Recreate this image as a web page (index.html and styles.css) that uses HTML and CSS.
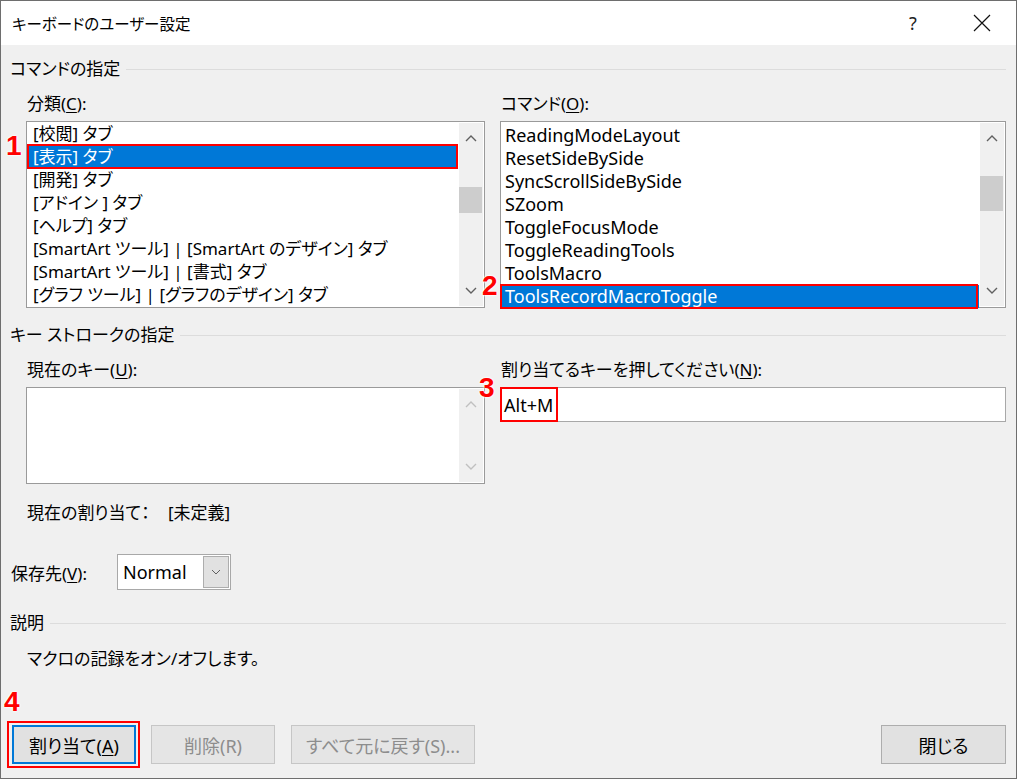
FILE: index.html
```html
<!DOCTYPE html>
<html lang="ja">
<head>
<meta charset="utf-8">
<link rel="stylesheet" href="styles.css">
</head>
<body>
<div class="window">
  <div class="titlebar">
    <span class="title">キーボードのユーザー設定</span>
    <span class="help">?</span>
    <span class="close">
      <svg width="18" height="18" viewBox="0 0 18 18"><path d="M1 1 L17 17 M17 1 L1 17" stroke="#111" stroke-width="1.2" fill="none"/></svg>
    </span>
  </div>
  <div class="content">
    <div class="group-head"><span>コマンドの指定</span></div>
    <div class="cols">
      <div class="col">
        <div class="label">分類(<u>C</u>):</div>
        <div class="listbox">
          <ul class="items">
            <li>[校閲] タブ</li>
            <li class="sel">[表示] タブ</li>
            <li>[開発] タブ</li>
            <li>[アドイン ] タブ</li>
            <li>[ヘルプ] タブ</li>
            <li>[SmartArt ツール] | [SmartArt のデザイン] タブ</li>
            <li>[SmartArt ツール] | [書式] タブ</li>
            <li>[グラフ ツール] | [グラフのデザイン] タブ</li>
          </ul>
          <div class="vscroll">
            <span class="arrow"><svg width="12" height="8" viewBox="0 0 12 8"><path d="M1 7 L6 2 L11 7" stroke="#606060" stroke-width="1.4" fill="none"/></svg></span>
            <span class="track"><span class="thumb thumb-l"></span></span>
            <span class="arrow"><svg width="12" height="8" viewBox="0 0 12 8"><path d="M1 1 L6 6 L11 1" stroke="#606060" stroke-width="1.4" fill="none"/></svg></span>
          </div>
          <span class="mark mark-1">1</span>
          <span class="redbox redbox-1"></span>
        </div>
      </div>
      <div class="col">
        <div class="label">コマンド(<u>O</u>):</div>
        <div class="listbox">
          <ul class="items items-r">
            <li>ReadingModeLayout</li>
            <li>ResetSideBySide</li>
            <li>SyncScrollSideBySide</li>
            <li>SZoom</li>
            <li>ToggleFocusMode</li>
            <li>ToggleReadingTools</li>
            <li>ToolsMacro</li>
            <li class="sel">ToolsRecordMacroToggle</li>
          </ul>
          <div class="vscroll">
            <span class="arrow"><svg width="12" height="8" viewBox="0 0 12 8"><path d="M1 7 L6 2 L11 7" stroke="#606060" stroke-width="1.4" fill="none"/></svg></span>
            <span class="track"><span class="thumb thumb-r"></span></span>
            <span class="arrow"><svg width="12" height="8" viewBox="0 0 12 8"><path d="M1 1 L6 6 L11 1" stroke="#606060" stroke-width="1.4" fill="none"/></svg></span>
          </div>
          <span class="mark mark-2">2</span>
          <span class="redbox redbox-2"></span>
        </div>
      </div>
    </div>

    <div class="group-head gh2"><span>キー ストロークの指定</span></div>
    <div class="cols cols2">
      <div class="col">
        <div class="label">現在のキー(<u>U</u>):</div>
        <div class="keybox">
          <div class="keyarea"></div>
          <div class="vscroll disabled">
            <span class="arrow"><svg width="12" height="8" viewBox="0 0 12 8"><path d="M1 7 L6 2 L11 7" stroke="#c0c0c0" stroke-width="1.4" fill="none"/></svg></span>
            <span class="track"></span>
            <span class="arrow"><svg width="12" height="8" viewBox="0 0 12 8"><path d="M1 1 L6 6 L11 1" stroke="#c0c0c0" stroke-width="1.4" fill="none"/></svg></span>
          </div>
        </div>
      </div>
      <div class="col">
        <div class="label">割り当てるキーを押してください(<u>N</u>):</div>
        <div class="inputbox">
          <span class="keytext">Alt+M</span>
          <span class="mark mark-3">3</span>
          <span class="redbox redbox-3"></span>
        </div>
      </div>
    </div>

    <div class="current"><span>現在の割り当て：</span><span class="curval">[未定義]</span></div>

    <div class="saverow">
      <span class="savelabel">保存先(<u>V</u>):</span>
      <div class="select">
        <span class="selval">Normal</span>
        <span class="selbtn"><svg width="10" height="6" viewBox="0 0 10 6"><path d="M1 1 L5 5 L9 1" stroke="#606060" stroke-width="1" fill="none"/></svg></span>
      </div>
    </div>

    <div class="group-head gh3"><span>説明</span></div>
    <div class="desc">マクロの記録をオン/オフします。</div>

    <div class="buttons">
      <div class="btnwrap">
        <button class="btn default">割り当て(<u>A</u>)</button>
        <span class="mark mark-4">4</span>
        <span class="redbox redbox-4"></span>
      </div>
      <button class="btn disabled btn-del">削除(R)</button>
      <button class="btn disabled btn-reset">すべて元に戻す(S)...</button>
      <span class="spacer"></span>
      <button class="btn btn-close">閉じる</button>
    </div>
  </div>
</div>
</body>
</html>
```

FILE: styles.css
```css
* { box-sizing: border-box; }
html, body { margin: 0; padding: 0; }
body {
  font-family: "Noto Sans", "Noto Sans CJK JP", sans-serif;
  font-size: 17px;
  font-feature-settings: "palt" 1;
  color: #000;
  background: #fff;
}
u { text-decoration: underline; text-underline-offset: 2px; }
.window {
  width: 1017px;
  height: 779px;
  border: 1px solid #6e6e6e;
  background: #f0f0f0;
  display: flex;
  flex-direction: column;
  overflow: hidden;
}
.titlebar {
  height: 44px;
  flex: none;
  background: #fff;
  display: flex;
  align-items: center;
  padding-left: 11px;
}
.title { font-size: 15.5px; flex: 1; }
.help { font-size: 18px; width: 20px; margin-right: 44px; color: #222; }
.close { width: 18px; margin-right: 25px; display: flex; }
.content {
  flex: 1;
  display: flex;
  flex-direction: column;
  padding: 13px 10px 0 9px;
}
.group-head {
  display: flex;
  align-items: center;
  height: 22px;
  line-height: 22px;
}
.group-head::after {
  content: "";
  flex: 1;
  height: 1px;
  background: #dcdcdc;
  margin-left: 6px;
}
.cols {
  display: grid;
  grid-template-columns: 459px 506px;
  column-gap: 15px;
  padding-left: 16px;
  margin-top: 13px;
}
.label { height: 22px; line-height: 22px; margin-left: 1px; margin-bottom: 6px; }
.listbox {
  position: relative;
  height: 187px;
  border: 1px solid #9a9a9a;
  background: #fff;
  display: flex;
}
.items {
  list-style: none;
  margin: 0;
  padding: 0;
  flex: 1;
}
.items li {
  height: 23px;
  line-height: 23px;
  padding-left: 6px;
  white-space: nowrap;
}
.items li.sel { background: #0078d7; color: #fff; }
.items-r { padding-top: 2px; }
.items-r li { padding-left: 4px; font-size: 18px; }
.vscroll {
  width: 26px;
  flex: none;
  background: #f0f0f0;
  display: flex;
  flex-direction: column;
  border: 1px solid #fff;
}
.arrow {
  height: 30px;
  display: flex;
  align-items: center;
  justify-content: center;
}
.track { flex: 1; position: relative; display: block; }
.thumb {
  position: absolute;
  left: 0;
  right: 1px;
  background: #cdcdcd;
}
.thumb-l { top: 34px; height: 26px; }
.thumb-r { top: 23px; height: 35px; }
.mark {
  position: absolute;
  color: #ff0000;
  font-family: "Liberation Sans", sans-serif;
  font-weight: bold;
  font-size: 28px;
  line-height: 28px;
  text-shadow: 0 0 2px #fff, 0 0 2px #fff, 0 0 3px #fff;
}
.redbox {
  position: absolute;
  border: 2px solid #ff0000;
  pointer-events: none;
}
.mark-1 { left: -21px; top: 10px; }
.redbox-1 { left: 0; top: 22px; width: 431px; height: 25px; }
.mark-2 { left: -19px; top: 150px; }
.redbox-2 { left: -1px; top: 162px; width: 478px; height: 25px; }
.gh2 { margin-top: 16px; }
.cols2 { margin-top: 13px; }
.keybox {
  height: 97px;
  border: 1px solid #9a9a9a;
  background: #fff;
  display: flex;
}
.keyarea { flex: 1; }
.vscroll.disabled { border: 1px solid #fff; }
.inputbox {
  position: relative;
  height: 35px;
  border: 1px solid #a8a8a8;
  background: #fff;
  display: flex;
  align-items: center;
  padding-left: 3px;
}
.keytext { line-height: 22px; font-size: 18px; }
.mark-3 { left: -22px; top: -14px; }
.redbox-3 { left: -1px; top: -1px; width: 58px; height: 35px; }
.current {
  margin-top: 18px;
  padding-left: 17px;
  height: 22px;
  line-height: 22px;
  display: flex;
}
.current span:first-child { width: 141px; }
.saverow {
  margin-top: 30px;
  display: flex;
  align-items: center;
  padding-left: 1px;
}
.savelabel { width: 106px; }
.select {
  width: 114px;
  height: 36px;
  border: 1px solid #a8a8a8;
  background: #fff;
  display: flex;
  align-items: center;
  padding: 1px;
}
.selval { flex: 1; padding-left: 4px; font-size: 18px; }
.selbtn {
  width: 26px;
  height: 32px;
  background: #e1e1e1;
  border: 1px solid #adadad;
  display: flex;
  align-items: center;
  justify-content: center;
}
.gh3 { margin-top: 22px; }
.desc {
  margin-top: 14px;
  padding-left: 17px;
  height: 22px;
  line-height: 22px;
}
.buttons {
  margin-top: 55px;
  display: flex;
  align-items: center;
  padding-left: 2px;
}
.btnwrap { position: relative; display: flex; }
.btn {
  font-family: inherit;
  font-feature-settings: "palt" 1;
  font-size: 18px;
  height: 39px;
  background: #e1e1e1;
  border: 1px solid #adadad;
  color: #000;
  padding: 0;
  margin: 0;
}
.btn.default { width: 124px; border: 2px solid #0078d7; }
.mark-4 { left: -8px; top: -37px; }
.redbox-4 { left: -5px; top: -4px; width: 133px; height: 47px; }
.btn.disabled { color: #8d8d8d; background: #e5e5e5; border-color: #c6c6c6; }
.btn-del { width: 124px; margin-left: 15px; }
.btn-reset { width: 184px; margin-left: 16px; }
.spacer { flex: 1; }
.btn-close { width: 125px; margin-right: 0; }
```
